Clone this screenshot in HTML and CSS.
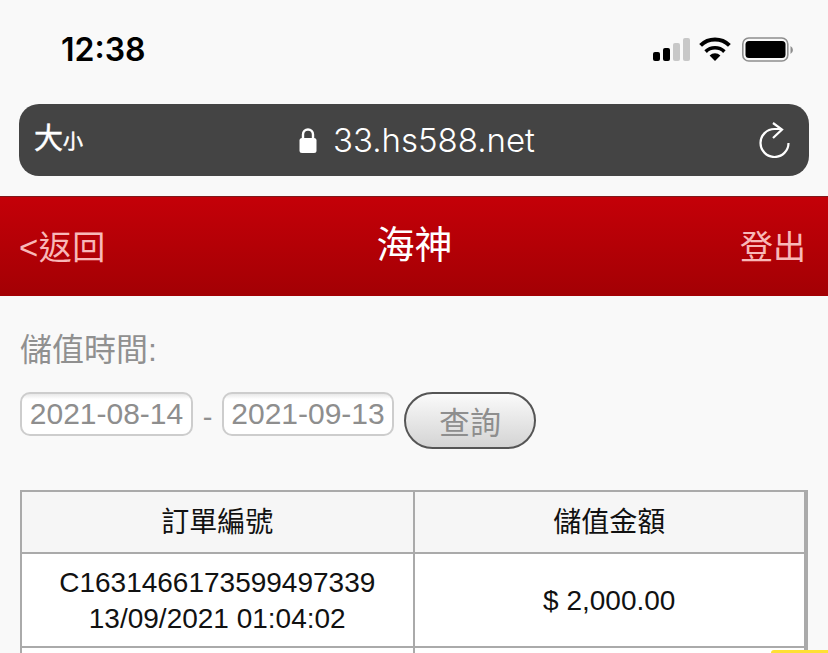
FILE: index.html
```html
<!DOCTYPE html>
<html lang="zh-Hant">
<head>
  <meta charset="UTF-8">
  <title>海神</title>
  <link rel="stylesheet" href="styles.css">
</head>
<body>

  <!-- Status bar -->
  <div class="status">
    <span class="clock">12:38</span>
    <div class="status-icons">
      <svg width="38" height="25" viewBox="0 0 38 25">
        <rect x="1" y="15" width="7" height="9" rx="2" fill="#000"/>
        <rect x="11" y="11" width="7" height="13" rx="2" fill="#000"/>
        <rect x="21" y="6" width="7" height="18" rx="2" fill="#c8c8c8"/>
        <rect x="31" y="1" width="7" height="23" rx="2" fill="#c8c8c8"/>
      </svg>
      <svg width="32" height="25" viewBox="0 0 32 25">
        <path d="M16 24 L10.6 18.4 A8 8 0 0 1 21.4 18.4 Z" fill="#000"/>
        <path d="M6.6 14.6 A13.5 13.5 0 0 1 25.4 14.6" fill="none" stroke="#000" stroke-width="3.6"/>
        <path d="M1.6 8.4 A20.5 20.5 0 0 1 30.4 8.4" fill="none" stroke="#000" stroke-width="4"/>
      </svg>
      <svg width="54" height="26" viewBox="0 0 54 26">
        <rect x="2.8" y="1" width="45" height="23" rx="6" fill="none" stroke="#8e8e8e" stroke-width="1.6"/>
        <rect x="5.5" y="4" width="40" height="17" rx="3.5" fill="#000"/>
        <path d="M50.5 9 A4.5 4.5 0 0 1 50.5 17 Z" fill="#8e8e8e"/>
      </svg>
    </div>
  </div>

  <!-- Address bar -->
  <div class="address">
    <span class="text-size">大<small>小</small></span>
    <div class="url">
      <svg width="18" height="26" viewBox="0 0 18 26">
        <path d="M4 12 V7.5 A5 5 0 0 1 14 7.5 V12" fill="none" stroke="#fff" stroke-width="2.4"/>
        <rect x="0.5" y="11" width="17" height="15" rx="2.5" fill="#fff"/>
      </svg>
      <span>33.hs588.net</span>
    </div>
    <svg width="32" height="36" viewBox="0 0 32 36">
      <path d="M23 7 L15.5 7 A14 14 0 1 0 29.5 21" fill="none" stroke="#fff" stroke-width="2.2"/>
      <path d="M14 1 L23 7.5 L14 16" fill="none" stroke="#fff" stroke-width="2.2"/>
    </svg>
  </div>

  <!-- Header -->
  <div class="header">
    <a class="link">&lt;返回</a>
    <h1>海神</h1>
    <a class="link link-right">登出</a>
  </div>

  <!-- Search -->
  <div class="search">
    <div class="search-label">儲值時間:</div>
    <div class="search-row">
      <input class="date" type="text" value="2021-08-14">
      <span class="dash">-</span>
      <input class="date" type="text" value="2021-09-13">
      <button class="btn">查詢</button>
    </div>
  </div>

  <!-- Records -->
  <table class="records">
    <tr>
      <th>訂單編號</th>
      <th>儲值金額</th>
    </tr>
    <tr>
      <td>C1631466173599497339<br>13/09/2021 01:04:02</td>
      <td>$ 2,000.00</td>
    </tr>
    <tr>
      <td>&nbsp;</td>
      <td>&nbsp;</td>
    </tr>
  </table>

  <div class="float-tab"></div>

</body>
</html>
```

FILE: styles.css
```css
* { box-sizing: border-box; }
body {
  margin: 0;
  height: 653px;
  overflow: hidden;
  position: relative;
  background-color: #f9f9f9;
  font-family: "Liberation Sans", "Noto Sans CJK TC", sans-serif;
}

.status {
  height: 104px;
  padding: 32px 34px 0 61px;
  display: flex;
  justify-content: space-between;
  align-items: flex-start;
}
.clock {
  font-family: Inter, sans-serif;
  font-size: 32px;
  font-weight: 600;
  line-height: 36px;
  color: #000;
}
.status-icons {
  display: flex;
  align-items: flex-start;
  gap: 9px;
  padding-top: 5px;
}

.address {
  margin: 0 19px;
  height: 72px;
  background-color: #444;
  border-radius: 20px;
  display: flex;
  align-items: center;
  justify-content: space-between;
  padding: 0 18px 0 15px;
  color: #fff;
  position: relative;
}
.text-size { font-size: 29px; line-height: 36px; -webkit-text-stroke: 0.5px #fff; }
.text-size small { font-size: 20px; }
.url {
  position: absolute;
  left: 280px;
  top: 18px;
  display: flex;
  align-items: center;
  gap: 16px;
  font-family: Inter, sans-serif;
  font-size: 33px;
  font-weight: 300;
  line-height: 36px;
}

.header {
  margin-top: 20px;
  height: 100px;
  background: linear-gradient(#c40008, #a30004);
  border-top: 1px solid #7e1a1c;
  display: flex;
  align-items: center;
  padding: 0 22px 0 19px;
  color: #f8b8b8;
}
.link { flex: 1; font-size: 33px; line-height: 40px; margin-top: 2px; letter-spacing: 0.5px; }
.link-right { text-align: right; letter-spacing: 0; }
.header h1 {
  margin: -4px 0 0 4px;
  font-size: 38px;
  font-weight: 400;
  color: #fff;
  line-height: 44px;
}

.search { padding: 33px 20px 0; color: #909090; }
.search-label { font-size: 32px; line-height: 42px; }
.search-row {
  margin-top: 21px;
  display: flex;
  align-items: flex-start;
}
.date {
  width: 173px;
  height: 44px;
  padding: 0;
  border: 2px solid #cdcdcd;
  border-radius: 10px;
  background: linear-gradient(#e8e8e8, #fff 5px);
  font-family: inherit;
  font-size: 30px;
  color: #8e8e8e;
  text-align: center;
}
.date + .dash + .date { width: 172px; }
.dash { width: 29px; text-align: center; font-size: 29px; line-height: 50px; }
.btn {
  width: 132px;
  height: 57px;
  margin-left: 10px;
  border: 2px solid #555;
  border-radius: 29px;
  background: linear-gradient(#fafafa, #d4d4d4);
  font-family: inherit;
  font-size: 31px;
  color: #8e8e8e;
  padding: 0;
}

.records {
  margin: 41px 0 0 20px;
  width: 788px;
  border-collapse: collapse;
  table-layout: fixed;
  background-color: #fff;
  border-right: 4px solid #aaa;
  color: #111;
}
.records th, .records td {
  border: 2px solid #aaa;
  text-align: center;
  font-size: 28px;
  font-weight: 400;
  line-height: 36px;
  padding: 2px 0 0;
}
.records th { background-color: #f6f6f6; height: 62px; }
.records td { height: 94px; }

.float-tab {
  position: absolute;
  right: 0;
  top: 650px;
  width: 57px;
  height: 3px;
  background-color: #ffe033;
  border-radius: 10px 0 0 0;
}
```
